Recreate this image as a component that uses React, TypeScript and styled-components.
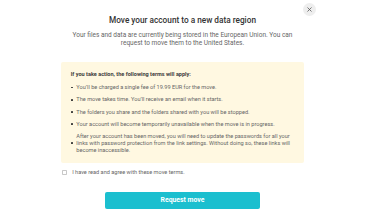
import styled, { createGlobalStyle } from "styled-components";

const GlobalStyle = createGlobalStyle`
  html, body {
    margin: 0;
    padding: 0;
    background: #ffffff;
  }
  body {
    font-family: Roboto, "Liberation Sans", Arial, sans-serif;
  }
`;

const Dialog = styled.div`
  position: relative;
  width: 365px;
  height: 219px;
  box-sizing: border-box;
  padding-top: 15px;
  display: flex;
  flex-direction: column;
  align-items: center;
  background: #ffffff;
`;

const CloseButton = styled.button`
  position: absolute;
  top: 2.5px;
  left: 302.5px;
  width: 13px;
  height: 13px;
  padding: 0;
  border: none;
  border-radius: 50%;
  background: #eeeeee;
  display: flex;
  align-items: center;
  justify-content: center;
  cursor: pointer;
`;

const Title = styled.h1`
  margin: 0;
  font-size: 8.25px;
  line-height: 10px;
  font-weight: 500;
  color: #333333;
  white-space: nowrap;
`;

const Subtitle = styled.p`
  margin: 5.7px 0 0;
  width: 226px;
  font-size: 6.5px;
  line-height: 8px;
  color: #666666;
  text-align: center;
`;

const TermsBox = styled.div`
  margin-top: 15.3px;
  width: 243px;
  box-sizing: border-box;
  padding: 8.8px 10px 9.3px 9.7px;
  background: #fff8e1;
  border-radius: 2px;
`;

const TermsHeading = styled.div`
  font-size: 5.55px;
  line-height: 7px;
  font-weight: 700;
  color: #3d3d3d;
  margin-bottom: 6.3px;
  white-space: nowrap;
`;

const TermsList = styled.ul`
  margin: 0;
  padding: 0;
  list-style: none;
  display: flex;
  flex-direction: column;
  gap: 5.6px;
`;

const TermItem = styled.li`
  display: flex;
  align-items: center;
  font-size: 5.6px;
  line-height: 6.7px;
  color: #666666;
`;

const Bullet = styled.span`
  flex: none;
  width: 1.7px;
  height: 1.7px;
  border-radius: 50%;
  background: #333333;
  margin: 0 3.8px 0 0.2px;
`;

const AgreeRow = styled.label`
  margin-top: 6.3px;
  width: 243px;
  display: flex;
  align-items: center;
  gap: 5px;
  padding-left: 0.7px;
  box-sizing: border-box;
  font-size: 5.6px;
  line-height: 7px;
  color: #666666;
`;

const CheckBox = styled.span`
  flex: none;
  width: 5.5px;
  height: 5.5px;
  box-sizing: border-box;
  border: 0.6px solid #c8c8c8;
  border-radius: 0.8px;
  background: #ffffff;
`;

const RequestButton = styled.button`
  margin-top: 15.7px;
  width: 155px;
  height: 17px;
  padding: 0;
  border: none;
  border-radius: 2px;
  background: #1bbfcf;
  color: #ffffff;
  font-family: Roboto, "Liberation Sans", Arial, sans-serif;
  font-size: 6.85px;
  font-weight: 700;
  cursor: pointer;
`;

const terms = [
  "You’ll be charged a single fee of 19.99 EUR for the move.",
  "The move takes time. You’ll receive an email when it starts.",
  "The folders you share and the folders shared with you will be stopped.",
  "Your account will become temporarily unavailable when the move is in progress.",
  "After your account has been moved, you will need to update the passwords for all your links with password protection from the link settings. Without doing so, these links will become inaccessible.",
];

export default function App() {
  return (
    <>
      <GlobalStyle />
      <Dialog>
        <CloseButton aria-label="Close">
          <svg width="5" height="5" viewBox="0 0 10 10">
            <path d="M1.5 1.5 L8.5 8.5 M8.5 1.5 L1.5 8.5" stroke="#555555" strokeWidth="1.6" strokeLinecap="round" />
          </svg>
        </CloseButton>
        <Title>Move your account to a new data region</Title>
        <Subtitle>
          Your files and data are currently being stored in the European Union. You can request to move them to the United States.
        </Subtitle>
        <TermsBox>
          <TermsHeading>If you take action, the following terms will apply:</TermsHeading>
          <TermsList>
            {terms.map((t) => (
              <TermItem key={t}>
                <Bullet />
                <span>{t}</span>
              </TermItem>
            ))}
          </TermsList>
        </TermsBox>
        <AgreeRow>
          <CheckBox />
          I have read and agree with these move terms.
        </AgreeRow>
        <RequestButton>Request move</RequestButton>
      </Dialog>
    </>
  );
}
